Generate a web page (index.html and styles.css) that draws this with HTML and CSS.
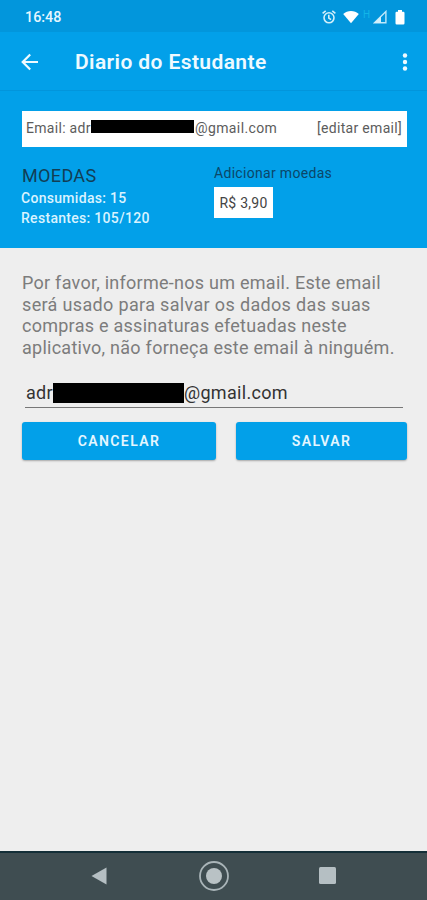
FILE: index.html
```html
<!DOCTYPE html>
<html lang="pt-BR">
<head>
<meta charset="utf-8">
<title>Diario do Estudante</title>
<link rel="stylesheet" href="styles.css">
</head>
<body>
<div class="screen">
  <div class="status">
    <span class="clock">16:48</span>
    <div class="status-icons">
      <svg class="alarm" width="14" height="14" viewBox="0 0 14 14" fill="none" stroke="#d3effa" stroke-width="1.6"><circle cx="7" cy="7.8" r="5"/><path d="M.6 3.4 3.7.9M13.4 3.4 10.3.9M6.8 4.8v3.3l2.3 1.6"/></svg>
      <svg class="wifi" width="16" height="14" viewBox="0 0 16 14" fill="#fff"><path d="M.2 4.1C4.4-.1 11.600-.1 15.800 4.100L8 13.200Z"/></svg>
      <span class="network">H</span>
      <svg class="signal" width="14" height="14" viewBox="0 0 14 14"><path d="M1.500 12.700 12.900 1.500V12.700Z" fill="none" stroke="#bfe8fa" stroke-width="1.400"/><path d="M1 13 8 6.200V13Z" fill="#d3effa"/></svg>
      <svg class="battery" width="10" height="15" viewBox="0 0 10 15" fill="#fff"><path d="M3 0h4v1.700h1.300q1.200 0 1.200 1.200v10.300q0 1.300-1.200 1.300H1.700Q.5 14.500.5 13.200V2.900q0-1.200 1.200-1.200H3Z"/></svg>
    </div>
  </div>
  <header class="appbar">
    <svg class="back" width="18" height="18" viewBox="0 0 18 18" fill="none" stroke="#eefaff" stroke-width="2.2"><path d="M17 9H2M9.200 1.500 1.700 9l7.500 7.500"/></svg>
    <h1>Diario do Estudante</h1>
    <svg class="more" width="6" height="18" viewBox="0 0 6 18" fill="#eefaff"><circle cx="3" cy="2.500" r="2.200"/><circle cx="3" cy="9" r="2.200"/><circle cx="3" cy="15.500" r="2.200"/></svg>
  </header>
  <section class="account">
    <div class="email-row">
      <span class="email-start">Email: adr</span><span class="mask"></span><span class="email-end">@gmail.com</span>
      <span class="edit">[editar email]</span>
    </div>
    <div class="coins">
      <div class="balance">
        <h2>MOEDAS</h2>
        <p class="used">Consumidas: 15</p>
        <p class="left">Restantes: 105/120</p>
      </div>
      <div class="add">
        <p class="add-label">Adicionar moedas</p>
        <span class="price"><span>R$ 3,90</span></span>
      </div>
    </div>
  </section>
  <main>
    <p class="info">Por favor, informe-nos um email. Este email<br><span class="wide">será usado para salvar os dados das suas</span><br>compras e assinaturas efetuadas neste<br>aplicativo, não forneça este email à ninguém.</p>
    <div class="field">
      <span class="field-start">adr</span><span class="mask"></span><span class="field-end">@gmail.com</span>
    </div>
    <div class="actions">
      <button class="cancel">CANCELAR</button>
      <button class="save">SALVAR</button>
    </div>
  </main>
  <nav>
    <svg width="16" height="18" viewBox="0 0 16 18" fill="#b5bfc3"><path d="M15.500.5v17L.5 9Z"/></svg>
    <svg class="home" width="30" height="30" viewBox="0 0 30 30"><circle cx="15" cy="15" r="14" fill="none" stroke="#a9b4b8" stroke-width="1.800"/><circle cx="15" cy="15" r="8" fill="#b9c2c5"/></svg>
    <svg width="17" height="17" viewBox="0 0 17 17"><rect width="17" height="17" rx="1.500" fill="#b5bfc3"/></svg>
  </nav>
</div>
</body>
</html>
```
FILE: styles.css
```css
* { box-sizing: border-box; }
body { margin: 0; font-family: Roboto, "Liberation Sans", sans-serif; }
h1, h2, p { margin: 0; font-weight: 400; white-space: nowrap; }
svg { display: block; flex: none; }
.screen { width: 427px; height: 900px; display: flex; flex-direction: column; background: #eee; overflow: hidden; }

.status { height: 32px; flex: none; padding: 2px 22px 0 25px; display: flex; align-items: center; justify-content: space-between; background: #0296dc; color: #e6f7ff; }
.clock { font-size: 14.3px; font-weight: 500; }
.status-icons { display: flex; align-items: center; }
.wifi { margin-left: 7px; }
.network { width: 8px; margin-left: 4px; margin-top: -5px; font-size: 10px; line-height: 10px; color: #12b5e8; }
.signal { margin-left: 2px; }
.battery { margin-left: 8px; }

.appbar { height: 59px; flex: none; display: flex; align-items: center; padding: 1px 19px 0 21px; background: #02a0e9; border-bottom: 1px solid #0295dc; }
.appbar h1 { margin-left: 36px; padding-top: 1px; font-size: 21px; font-weight: 600; letter-spacing: .4px; color: #eefaff; }
.more { margin-left: auto; }

.account { height: 157px; flex: none; padding: 20px 20px 0 22px; background: #02a0e9; }
.email-row { height: 36px; padding: 0 5px 0 4px; display: flex; align-items: center; background: #fff; color: #5c5c5c; font-size: 14px; letter-spacing: .3px; white-space: nowrap; }
.email-row > span { margin-top: -3px; }
.email-row .mask { width: 103px; height: 13px; margin-top: -5px; background: #000; }
.email-start { width: 65px; }
.email-end { padding-left: 1px; letter-spacing: .38px; }
.edit { margin-left: auto; }
.coins { display: flex; }
.balance { width: 192px; padding-top: 18px; }
.balance h2 { font-size: 18px; line-height: 22px; letter-spacing: .35px; color: #123e55; }
.balance p { margin-left: -1px; font-size: 14px; line-height: 20px; letter-spacing: .3px; font-weight: 500; color: #d9f3ff; }
.balance .used { margin-top: 1px; }
.add { padding-top: 17px; }
.add-label { font-size: 14px; line-height: 18px; letter-spacing: .31px; color: #0b4668; }
.price { width: 59px; height: 31px; margin-top: 5px; display: flex; align-items: center; justify-content: center; background: #fff; color: #444; font-size: 14px; letter-spacing: .25px; white-space: nowrap; }

main { flex: 1; padding: 24px 20px 0 22px; }
.info { font-size: 18px; line-height: 21.7px; letter-spacing: .26px; color: #7c7c7c; }
.wide { letter-spacing: .34px; }
.field { height: 33px; margin: 16px 4px 0 3px; padding: 4px 0 0 1px; display: flex; align-items: center; border-bottom: 1px solid #777; color: #333; font-size: 18px; letter-spacing: .3px; white-space: nowrap; }
.field-start { width: 27px; }
.field .mask { width: 131px; height: 20px; background: #000; }
.actions { margin-top: 14px; display: grid; grid-template-columns: 194px 171px; gap: 20px; }
button { height: 38px; padding: 0; border: 0; border-radius: 3px; background: #02a0e9; color: #e4f6ff; font: 600 14px Roboto, sans-serif; letter-spacing: 1.4px; box-shadow: 0 1px 2px rgba(0,0,0,.3); }

nav { height: 49px; flex: none; display: flex; align-items: center; padding: 0 91px 2px; justify-content: space-between; background: #3f4d51; border-top: 2px solid #142f38; }
.home { margin-left: 2px; }
```
